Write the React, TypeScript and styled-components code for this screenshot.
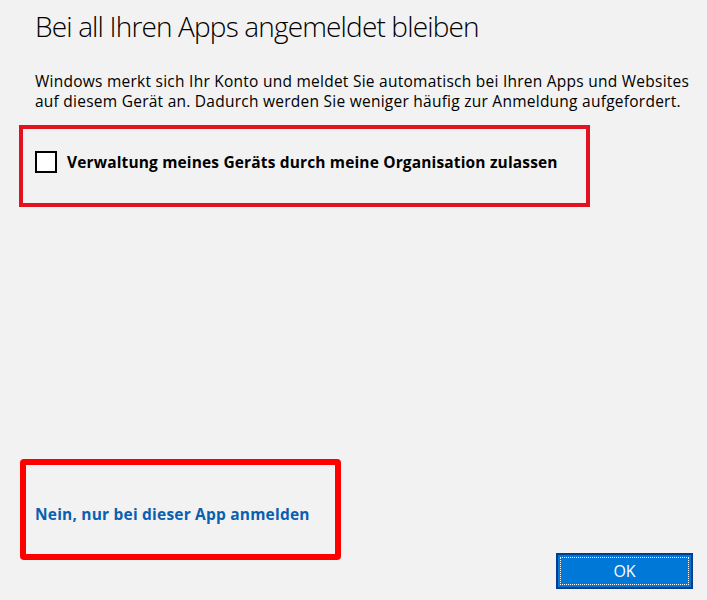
import React from "react";
import styled, { createGlobalStyle } from "styled-components";

const Global = createGlobalStyle`
  html, body { margin: 0; padding: 0; background: #f2f2f2; }
  * { box-sizing: border-box; }
`;

const Page = styled.div`
  display: flex;
  flex-direction: column;
  height: 600px;
  padding: 0 14px 11px 19px;
  background: #f2f2f2;
  font-family: "Open Sans", "Noto Sans", sans-serif;
  color: #000;
`;

const Title = styled.h1`
  margin: 8px 0 0 16px;
  font-size: 28px;
  line-height: 36px;
  font-weight: 300;
  letter-spacing: -0.85px;
  white-space: nowrap;
`;

const Body = styled.p`
  margin: 27px 0 0 16px;
  font-size: 15.5px;
  line-height: 20px;
  letter-spacing: 0.25px;
  white-space: nowrap;
`;

const HighlightBox = styled.div<{ $thick: number; $radius: number; $color: string }>`
  border: ${(p) => p.$thick}px solid ${(p) => p.$color};
  border-radius: ${(p) => p.$radius}px;
`;

const OptionBox = styled(HighlightBox)`
  margin-top: 14px;
  width: 571px;
  height: 82px;
  display: flex;
  align-items: flex-start;
  gap: 10px;
  padding: 22px 0 0 12px;
`;

const CheckBox = styled.span`
  width: 22px;
  height: 22px;
  border: 2px solid #000;
  background: #fff;
  flex: none;
`;

const Label = styled.label`
  font-size: 15.5px;
  line-height: 22px;
  font-weight: 700;
  letter-spacing: 0.15px;
  white-space: nowrap;
`;

const Spacer = styled.div`
  flex: 1;
`;

const Footer = styled.div`
  display: flex;
  justify-content: space-between;
  align-items: flex-end;
`;

const LinkBox = styled(HighlightBox)`
  width: 321px;
  height: 101px;
  margin: 0 0 29px 1px;
  padding: 38px 0 0 9px;
`;

const Link = styled.a`
  font-size: 15.5px;
  line-height: 20px;
  font-weight: 700;
  color: #0a5fb0;
  letter-spacing: 0.2px;
  text-decoration: none;
  white-space: nowrap;
`;

const OkButton = styled.button`
  width: 137px;
  height: 36px;
  padding: 2px;
  border: 2px solid #003d8f;
  background: #0078d7;
  font-family: inherit;
`;

const Focus = styled.span`
  display: flex;
  align-items: center;
  justify-content: center;
  height: 100%;
  border: 1px dotted #ffffff;
  color: #fff;
  font-size: 16px;
  line-height: 20px;
`;

export default function App() {
  return (
    <>
      <Global />
      <Page>
        <Title>Bei all Ihren Apps angemeldet bleiben</Title>
        <Body>
          Windows merkt sich Ihr Konto und meldet Sie automatisch bei Ihren Apps und Websites
          <br />
          auf diesem Gerät an. Dadurch werden Sie weniger häufig zur Anmeldung aufgefordert.
        </Body>
        <OptionBox $thick={4} $radius={0} $color="#e2121f">
          <CheckBox />
          <Label>Verwaltung meines Geräts durch meine Organisation zulassen</Label>
        </OptionBox>
        <Spacer />
        <Footer>
          <LinkBox $thick={6} $radius={4} $color="#ff0000">
            <Link href="#">Nein, nur bei dieser App anmelden</Link>
          </LinkBox>
          <OkButton>
            <Focus>OK</Focus>
          </OkButton>
        </Footer>
      </Page>
    </>
  );
}
